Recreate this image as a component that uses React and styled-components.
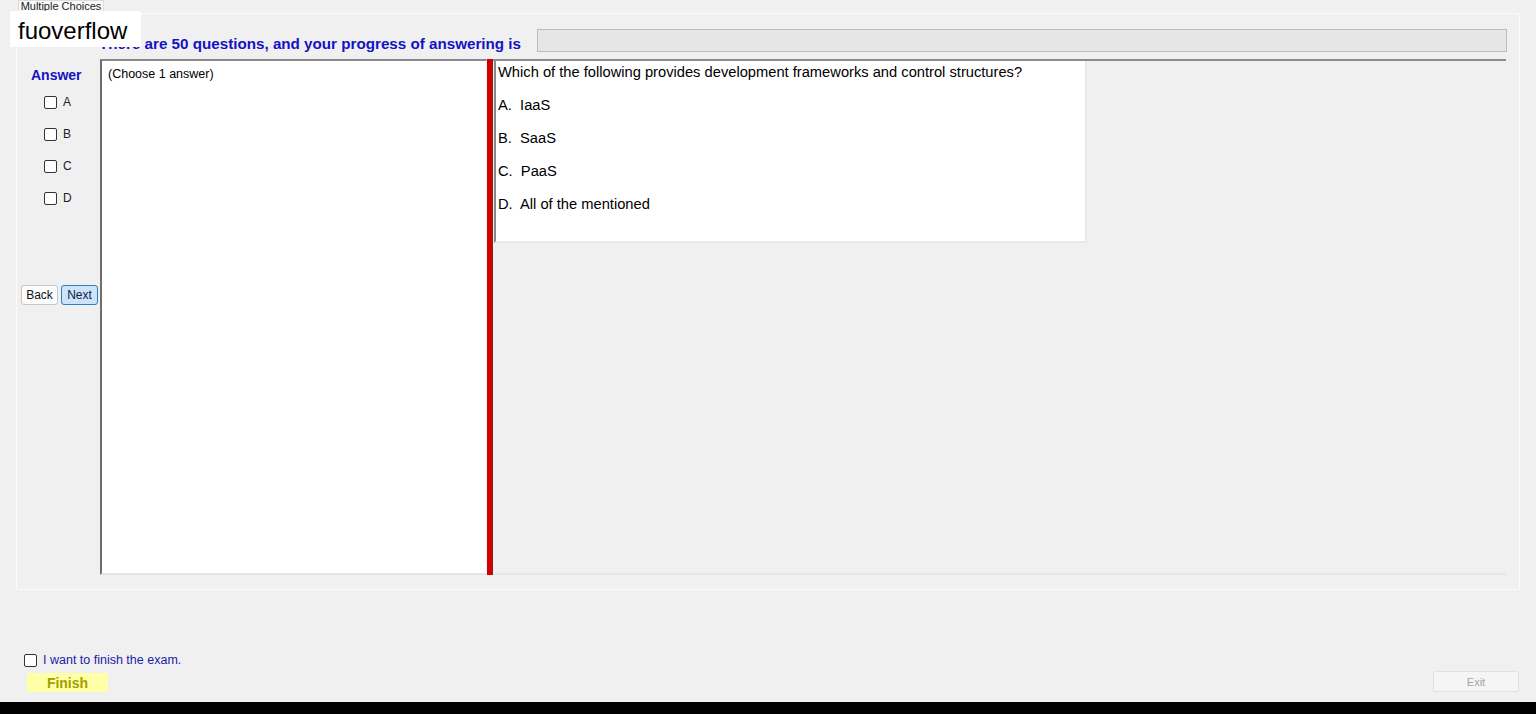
import styled, { createGlobalStyle } from 'styled-components';

const GlobalStyle = createGlobalStyle`
    html, body {
        margin: 0;
        padding: 0;
        background: #f0f0f0;
        font-family: "Liberation Sans", Arial, sans-serif;
    }
`;

const blue = '#1313c4';
const options = ['A', 'B', 'C', 'D'];
const answers = ['IaaS', 'SaaS', 'PaaS', 'All of the mentioned'];

const App = () => {
    return <Page>
        <GlobalStyle />
        <Watermark>fuoverflow</Watermark>

        <TabStrip>
            <Tab>Multiple Choices</Tab>
        </TabStrip>

        <TabPage>
            <HeaderRow>
                <Heading>There are 50 questions, and your progress of answering is</Heading>
                <Progress />
            </HeaderRow>

            <Body>
                <AnswerColumn>
                    <AnswerTitle>Answer</AnswerTitle>
                    {options.map(letter => (
                        <Option key={letter}>
                            <Check type="checkbox" />
                            <span>{letter}</span>
                        </Option>
                    ))}
                    <NavButtons>
                        <NavButton>Back</NavButton>
                        <NavButton primary>Next</NavButton>
                    </NavButtons>
                </AnswerColumn>

                <NoteBox>(Choose 1 answer)</NoteBox>
                <Splitter />

                <QuestionPanel>
                    <QuestionBox>
                        <p>Which of the following provides development frameworks and control structures?</p>
                        {answers.map((text, i) => (
                            <p key={text}>{options[i]}.&nbsp; {text}</p>
                        ))}
                    </QuestionBox>
                </QuestionPanel>
            </Body>
        </TabPage>

        <Footer>
            <FinishCheck>
                <Check type="checkbox" />
                <span>I want to finish the exam.</span>
            </FinishCheck>
            <FooterRow>
                <FinishButton>Finish</FinishButton>
                <ExitButton disabled>Exit</ExitButton>
            </FooterRow>
        </Footer>

        <Taskbar />
    </Page>
}

const Page = styled.div`
    position: relative;
    height: 714px;
    display: flex;
    flex-direction: column;
    overflow: hidden;
    color: #000;
`;

const Watermark = styled.div`
    position: absolute;
    left: 10px;
    top: 11px;
    width: 131px;
    height: 36px;
    background: #fff;
    font-size: 24px;
    line-height: 40px;
    padding-left: 8px;
    box-sizing: border-box;
    z-index: 2;
`;

const TabStrip = styled.div`
    height: 13px;
    padding-left: 18px;
    display: flex;
`;

const Tab = styled.div`
    width: 86px;
    background: #f9f9f9;
    border: 1px solid #dcdcdc;
    border-bottom: none;
    font-size: 11px;
    line-height: 10px;
    text-align: center;
    overflow: hidden;
    color: #222;
    box-sizing: border-box;
`;

const TabPage = styled.div`
    margin: 0 16px;
    height: 577px;
    box-sizing: border-box;
    border: 1px solid #fbfbfb;
    padding: 15px 13px 14px 3px;
    display: flex;
    flex-direction: column;
`;

const HeaderRow = styled.div`
    display: flex;
    align-items: center;
    height: 23px;
    margin-bottom: 7px;
    padding-left: 79px;
`;

const Heading = styled.div`
    color: ${blue};
    font-weight: bold;
    font-size: 15.2px;
    padding-top: 6px;
    margin-right: 16px;
    white-space: nowrap;
`;

const Progress = styled.div`
    flex: 1;
    height: 23px;
    margin-right: -1px;
    background: #e6e6e6;
    border: 1px solid #bcbcbc;
    box-sizing: border-box;
`;

const Body = styled.div`
    flex: 1;
    display: flex;
`;

const AnswerColumn = styled.div`
    width: 80px;
    display: flex;
    flex-direction: column;
    align-items: flex-start;
`;

const AnswerTitle = styled.div`
    color: ${blue};
    font-weight: bold;
    font-size: 14px;
    padding: 8px 0 0 11px;
    height: 29px;
    box-sizing: border-box;
`;

const Option = styled.label`
    display: flex;
    gap: 6px;
    height: 32px;
    padding-left: 24px;
    font-size: 12px;
    color: #222;
    align-self: stretch;
    align-items: flex-start;
    padding-top: 8px;
    box-sizing: border-box;
    span {
        line-height: 13px;
    }
`;

const Check = styled.input`
    appearance: none;
    margin: 0;
    width: 13px;
    height: 13px;
    border: 1px solid #333;
    border-radius: 2px;
    background: #fff;
    box-sizing: border-box;
`;

const NavButtons = styled.div`
    display: flex;
    gap: 3px;
    margin-top: 69px;
    padding-left: 1px;
`;

const NavButton = styled.button`
    width: 37px;
    height: 20px;
    padding: 0;
    font-family: inherit;
    font-size: 12px;
    color: ${p => p.primary ? '#10204a' : '#111'};
    background: ${p => p.primary ? '#cce4f7' : '#fdfdfd'};
    border: 1px solid ${p => p.primary ? '#2f7fc0' : '#c6c6c6'};
    border-radius: 3px;
`;

const NoteBox = styled.div`
    width: 387px;
    background: #fff;
    border-top: 2px solid #8a8a8a;
    border-left: 2px solid #6e6e6e;
    border-right: 1px solid #f2f2f2;
    border-bottom: 2px solid #e4e4e4;
    box-sizing: border-box;
    font-size: 12.5px;
    padding: 6px 6px;
`;

const Splitter = styled.div`
    width: 5px;
    background: #d40000;
    border-right: 1px solid #8a2020;
`;

const QuestionPanel = styled.div`
    flex: 1;
    border-top: 2px solid #8c8c8c;
    border-bottom: 2px solid #e6e6e6;
    padding-left: 1px;
`;

const QuestionBox = styled.div`
    width: 593px;
    height: 182px;
    background: #fff;
    border-left: 2px solid #8a8a8a;
    border-right: 2px solid #e8e8e8;
    border-bottom: 2px solid #e8e8e8;
    box-sizing: border-box;
    font-size: 14.7px;
    padding: 3px 2px;

    p {
        margin: 0 0 17px;
        line-height: 16px;
    }
`;

const Footer = styled.div`
    flex: 1;
    display: flex;
    flex-direction: column;
    justify-content: flex-end;
    padding: 0 17px 10px 24px;
`;

const FinishCheck = styled.label`
    display: flex;
    align-items: center;
    gap: 6px;
    font-size: 12.5px;
    color: #1c1ca8;
    height: 14px;
    margin-bottom: 4px;
`;

const FooterRow = styled.div`
    display: flex;
    justify-content: space-between;
    align-items: center;
`;

const FinishButton = styled.div`
    margin-left: 3px;
    width: 81px;
    height: 19px;
    background: #ffffa8;
    color: #a0a000;
    font-weight: bold;
    font-size: 14px;
    line-height: 20px;
    text-align: center;
    margin-top: 1px;
`;

const ExitButton = styled.button`
    width: 86px;
    height: 21px;
    padding: 0;
    font-family: inherit;
    font-size: 11px;
    color: #a6a6a6;
    background: #f5f5f5;
    border: 1px solid #e2e2e2;
    border-radius: 2px;
`;

const Taskbar = styled.div`
    height: 12px;
    background: #000;
`;

export default App;
